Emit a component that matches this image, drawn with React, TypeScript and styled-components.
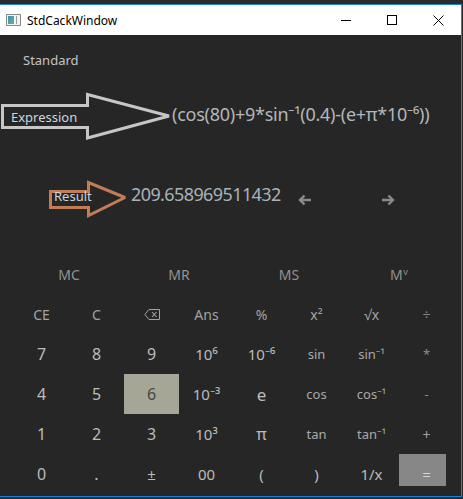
import React from "react";
import styled, { createGlobalStyle, css } from "styled-components";

const GlobalStyle = createGlobalStyle`
  html, body { margin: 0; padding: 0; background: #2b2b2b; }
  body { font-family: "Noto Sans", "Open Sans", sans-serif; }
  * { box-sizing: border-box; }
`;

const Page = styled.div`
  width: 463px;
  height: 499px;
  padding-top: 4px;
  background: #2b2b2b;
  overflow: hidden;
`;

const Window = styled.div`
  width: 462px;
  height: 493px;
  border: 1px solid #1883d7;
  border-left: none;
  display: flex;
  flex-direction: column;
`;

const TitleBar = styled.div`
  height: 30px;
  flex: none;
  background: #ffffff;
  display: flex;
  align-items: center;
`;

const AppIcon = styled.svg`
  margin-left: 6px;
  flex: none;
`;

const TitleText = styled.span`
  margin-left: 6px;
  font-size: 12px;
  color: #000;
`;

const Controls = styled.div`
  margin-left: auto;
  display: flex;
  height: 100%;
`;

const ControlButton = styled.div`
  width: 46px;
  height: 30px;
  display: flex;
  align-items: center;
  justify-content: center;
`;

const MinLine = styled.div`
  width: 10px;
  height: 1px;
  background: #000;
`;

const MaxBox = styled.div`
  width: 10px;
  height: 10px;
  border: 1px solid #000;
`;

const Body = styled.div`
  flex: 1;
  background: #262626;
  padding-top: 15px;
  display: flex;
  flex-direction: column;
`;

const ModeLabel = styled.div`
  padding-left: 23px;
  height: 20px;
  line-height: 20px;
  font-size: 13px;
  color: #c4c4c4;
`;

const ExprRow = styled.div`
  margin-top: 22px;
  height: 50px;
  display: flex;
  align-items: flex-start;
`;

const ArrowTag = styled.div<{ $w: number; $h: number; $pt: number; $pl: number }>`
  position: relative;
  flex: none;
  width: ${(p) => p.$w}px;
  height: ${(p) => p.$h}px;
  padding-top: ${(p) => p.$pt}px;
  padding-left: ${(p) => p.$pl}px;
  & > svg {
    position: absolute;
    left: 0;
    top: 0;
    overflow: visible;
  }
`;

const TagLabel = styled.span`
  position: relative;
  display: block;
  font-size: 13px;
  line-height: 16px;
  color: #cbd6de;
`;

const ExprText = styled.div`
  margin-top: 10px;
  font-size: 18px;
  line-height: 24px;
  color: #b3b7bb;
  white-space: nowrap;
  letter-spacing: -0.25px;
`;

const ResultRow = styled.div`
  margin-top: 37px;
  height: 40px;
  padding-left: 48px;
  display: flex;
  align-items: flex-start;
`;

const ResultText = styled.div`
  margin-top: 3px;
  margin-left: 3px;
  width: 167px;
  flex: none;
  font-size: 18px;
  line-height: 24px;
  color: #a9b2ba;
  white-space: nowrap;
  letter-spacing: -0.6px;
`;

const NavArrow = styled.svg<{ $ml: number }>`
  margin-left: ${(p) => p.$ml}px;
  margin-top: 15px;
  flex: none;
`;

const MemoryRow = styled.div`
  margin-top: 35px;
  padding-left: 14px;
  display: grid;
  grid-template-columns: repeat(4, 110px);
  height: 40px;
`;

const MemKey = styled.div`
  display: flex;
  align-items: center;
  justify-content: center;
  font-size: 14px;
  color: #939393;
`;

const MemSup = styled.span`
  font-size: 9px;
  position: relative;
  top: -3px;
  margin-left: 0.5px;
`;

const Keypad = styled.div`
  padding-left: 14px;
  display: grid;
  grid-template-columns: repeat(8, 55px);
  grid-auto-rows: 40px;
`;

type Tone = "digit" | "func" | "op" | "dim";

const toneColor: Record<Tone, string> = {
  digit: "#bcbcbc",
  func: "#a9a9a9",
  op: "#a3a3a3",
  dim: "#8c8c8c",
};

const Key = styled.div<{ $tone: Tone; $size: number; $active?: boolean; $eq?: boolean }>`
  display: flex;
  align-items: center;
  justify-content: center;
  font-size: ${(p) => p.$size}px;
  color: ${(p) => toneColor[p.$tone]};
  white-space: nowrap;
  ${(p) =>
    p.$active &&
    css`
      background: #a6a696;
      color: #454545;
    `}
  ${(p) =>
    p.$eq &&
    css`
      background: linear-gradient(#878787, #878787) 0 0 / 47px 32px no-repeat;
      color: #d8d4cc;
    `}
`;

const BackspaceIcon = () => (
  <svg width="16" height="11" viewBox="0 0 16 11">
    <path d="M5 0.5 H15.5 V10.5 H5 L0.8 5.5 Z" fill="none" stroke="#a3a3a3" strokeWidth="1" />
    <path d="M8 3 L12.5 8 M12.5 3 L8 8" stroke="#a3a3a3" strokeWidth="1.1" />
  </svg>
);

type KeyDef = { label: React.ReactNode; tone: Tone; size: number; active?: boolean; eq?: boolean };

const keys: KeyDef[] = [
  { label: "CE", tone: "op", size: 14 },
  { label: "C", tone: "op", size: 14 },
  { label: <BackspaceIcon />, tone: "op", size: 14 },
  { label: "Ans", tone: "op", size: 14 },
  { label: "%", tone: "op", size: 14 },
  { label: "x²", tone: "op", size: 14 },
  { label: "√x", tone: "op", size: 14 },
  { label: "÷", tone: "dim", size: 14 },

  { label: "7", tone: "digit", size: 16 },
  { label: "8", tone: "digit", size: 16 },
  { label: "9", tone: "digit", size: 16 },
  { label: "10⁶", tone: "digit", size: 15 },
  { label: "10⁻⁶", tone: "digit", size: 15 },
  { label: "sin", tone: "func", size: 13 },
  { label: "sin⁻¹", tone: "func", size: 13 },
  { label: "*", tone: "dim", size: 13 },

  { label: "4", tone: "digit", size: 16 },
  { label: "5", tone: "digit", size: 16 },
  { label: "6", tone: "digit", size: 16, active: true },
  { label: "10⁻³", tone: "digit", size: 15 },
  { label: "e", tone: "digit", size: 17 },
  { label: "cos", tone: "func", size: 13 },
  { label: "cos⁻¹", tone: "func", size: 13 },
  { label: "-", tone: "dim", size: 13 },

  { label: "1", tone: "digit", size: 16 },
  { label: "2", tone: "digit", size: 16 },
  { label: "3", tone: "digit", size: 16 },
  { label: "10³", tone: "digit", size: 15 },
  { label: "π", tone: "digit", size: 16 },
  { label: "tan", tone: "func", size: 13 },
  { label: "tan⁻¹", tone: "func", size: 13 },
  { label: "+", tone: "op", size: 14 },

  { label: "0", tone: "digit", size: 16 },
  { label: ".", tone: "digit", size: 16 },
  { label: "±", tone: "digit", size: 15 },
  { label: "00", tone: "digit", size: 15 },
  { label: "(", tone: "digit", size: 15 },
  { label: ")", tone: "digit", size: 15 },
  { label: "1/x", tone: "digit", size: 15 },
  { label: "=", tone: "digit", size: 15, eq: true },
];

export default function App() {
  return (
    <>
      <GlobalStyle />
      <Page>
        <Window>
          <TitleBar>
            <AppIcon width="15" height="12" viewBox="0 0 15 12">
              <defs>
                <linearGradient id="ig" x1="0" y1="0" x2="1" y2="1">
                  <stop offset="0" stopColor="#3c8fb0" />
                  <stop offset="1" stopColor="#5cb89a" />
                </linearGradient>
              </defs>
              <rect x="0.5" y="0.5" width="14" height="11" fill="#f2f2f2" stroke="#8a8a8a" />
              <rect x="2" y="2" width="6" height="8" fill="url(#ig)" />
              <rect x="10" y="2" width="1" height="8" fill="#9a9a9a" />
            </AppIcon>
            <TitleText>StdCackWindow</TitleText>
            <Controls>
              <ControlButton>
                <MinLine />
              </ControlButton>
              <ControlButton>
                <MaxBox />
              </ControlButton>
              <ControlButton>
                <svg width="11" height="11" viewBox="0 0 11 11">
                  <path d="M0.5 0.5 L10.5 10.5 M10.5 0.5 L0.5 10.5" stroke="#000" strokeWidth="1" />
                </svg>
              </ControlButton>
            </Controls>
          </TitleBar>
          <Body>
            <ModeLabel>Standard</ModeLabel>
            <ExprRow>
              <ArrowTag $w={172} $h={50} $pt={17} $pl={11}>
                <svg width="172" height="50" viewBox="0 0 172 50">
                  <polygon
                    points="2.5,13.5 87.5,13.5 87.5,2.5 169,24 87.5,46 87.5,35.5 2.5,35.5"
                    fill="none"
                    stroke="#c6c6c6"
                    strokeWidth="3"
                    strokeLinejoin="miter"
                    strokeMiterlimit="2"
                  />
                </svg>
                <TagLabel>Expression</TagLabel>
              </ArrowTag>
              <ExprText>(cos(80)+9*sin⁻¹(0.4)-(e+π*10⁻⁶))</ExprText>
            </ExprRow>
            <ResultRow>
              <ArrowTag $w={80} $h={40} $pt={9} $pl={6}>
                <svg width="80" height="40" viewBox="0 0 80 40">
                  <polygon
                    points="2.5,12.5 40.5,12.5 40.5,3.5 77,18.5 40.5,36.5 40.5,28.5 2.5,28.5"
                    fill="none"
                    stroke="#c27d56"
                    strokeWidth="3"
                    strokeLinejoin="miter"
                    strokeMiterlimit="2"
                  />
                </svg>
                <TagLabel>Result</TagLabel>
              </ArrowTag>
              <ResultText>209.658969511432</ResultText>
              <NavArrow $ml={0} width="14" height="12" viewBox="0 0 14 12">
                <path d="M6.5 1.5 L2 6 L6.5 10.5 M2 6 H13" fill="none" stroke="#8a8a8a" strokeWidth="2.4" />
              </NavArrow>
              <NavArrow $ml={69} width="14" height="12" viewBox="0 0 14 12">
                <path d="M7.5 1.5 L12 6 L7.5 10.5 M12 6 H1" fill="none" stroke="#8a8a8a" strokeWidth="2.4" />
              </NavArrow>
            </ResultRow>
            <MemoryRow>
              <MemKey>MC</MemKey>
              <MemKey>MR</MemKey>
              <MemKey>MS</MemKey>
              <MemKey>
                M<MemSup>v</MemSup>
              </MemKey>
            </MemoryRow>
            <Keypad>
              {keys.map((k, i) => (
                <Key key={i} $tone={k.tone} $size={k.size} $active={k.active} $eq={k.eq}>
                  {k.label}
                </Key>
              ))}
            </Keypad>
          </Body>
        </Window>
      </Page>
    </>
  );
}
